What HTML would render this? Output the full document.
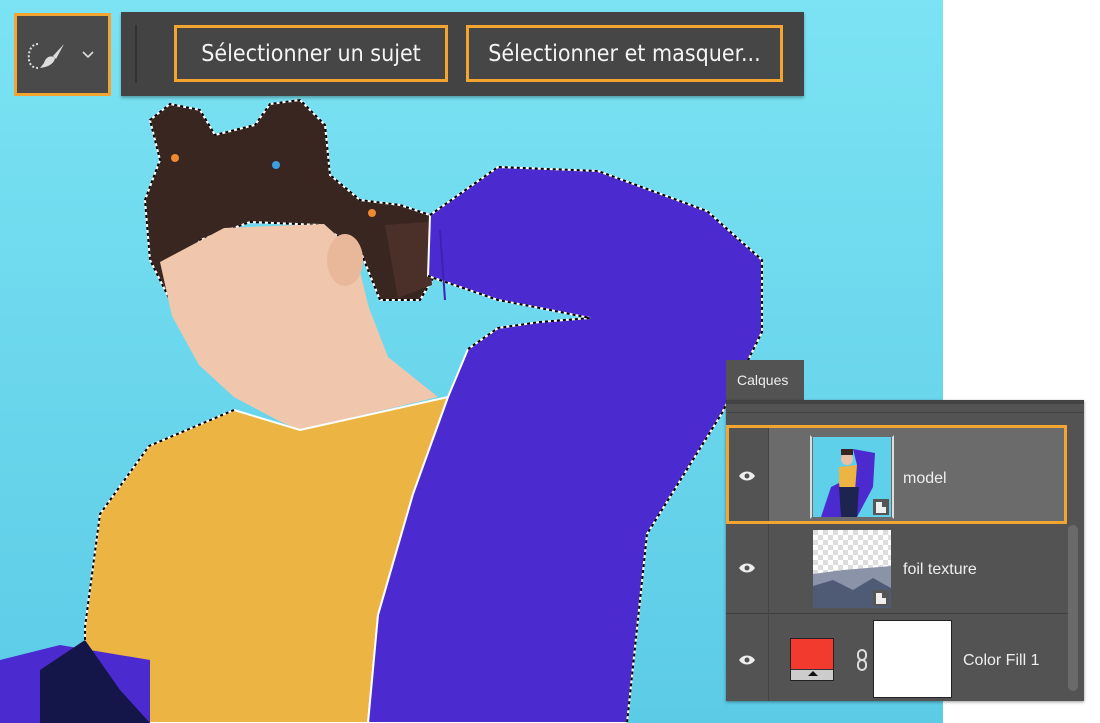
<!DOCTYPE html>
<html><head><meta charset="utf-8"><style>
*{margin:0;padding:0;box-sizing:border-box}
body{width:1100px;height:723px;overflow:hidden;background:#fff;position:relative;font-family:"Liberation Sans",sans-serif}
.abs{position:absolute}
.btn{position:absolute;top:25px;height:57px;border:3px solid #f2a530;background:#464646;color:#f4f4f4;font-size:23px;display:flex;align-items:center;justify-content:center;font-family:"DejaVu Sans Condensed","Liberation Sans Narrow","Liberation Sans",sans-serif}
.lbl{position:absolute;color:#eee;font-size:16px}
</style></head><body>
<svg class="abs" style="left:0;top:0" width="943" height="723" viewBox="0 0 943 723">
<defs><linearGradient id="bg" x1="0" y1="0" x2="0" y2="1"><stop offset="0" stop-color="#7be3f3"/><stop offset="1" stop-color="#5ccbe6"/></linearGradient></defs>
<rect width="943" height="723" fill="url(#bg)"/>
<g stroke="#fff" stroke-width="2">
<path d="M150 120 L170 104 L200 110 L215 135 L255 125 L270 104 L300 100 L325 125 L330 175 L360 200 L400 205 L430 215 L438 270 L420 300 L380 300 L360 250 L320 225 L250 222 L200 240 L170 300 L150 260 L145 200 L160 160 Z" fill="#3a2620"/>
</g>
<path d="M150 120 L170 104 L200 110 L215 135 L255 125 L270 104 L300 100 L325 125 L330 175 L360 200 L400 205 L430 215 L438 270 L420 300 L380 300 L360 250 L320 225 L250 222 L200 240 L170 300 L150 260 L145 200 L160 160 Z" fill="none" stroke="#000" stroke-width="2" stroke-dasharray="3 3"/>
<path d="M160 262 L224 228 L324 224 L355 252 L369 308 L388 357 L438 397 L300 430 L279 421 L234 397 L199 365 L172 316 Z" fill="#f0c7ad"/>
<ellipse cx="345" cy="260" rx="18" ry="26" fill="#e9b89b"/>
<path d="M385 225 L428 222 L432 285 L398 298 Z" fill="#4a3028"/>
<path d="M234 410 L300 430 L448 397 L413 494 L378 615 L368 723 L85 723 L85 627 L100 514 L149 446 Z" fill="#ecb443" stroke="#fff" stroke-width="2"/>
<path d="M234 410 L149 446 L100 514 L85 627 L85 723" fill="none" stroke="#000" stroke-width="2" stroke-dasharray="3 3"/>
<path d="M430 215 L498 167 L598 171 L707 211 L762 260 L762 332 L722 413 L647 534 L627 723 L368 723 L378 615 L413 494 L448 397 L468 349 L498 328 L540 322 L590 318 L540 308 L498 300 L428 276 Z" fill="#4b2bd0" stroke="#fff" stroke-width="2"/>
<path d="M430 215 L498 167 L598 171 L707 211 L762 260 L762 332 L722 413 L647 534 L627 723 M468 349 L498 328 L540 322 L590 318 L540 308 L498 300 L428 276" fill="none" stroke="#000" stroke-width="2" stroke-dasharray="3 3"/>
<path d="M440 230 L445 300" stroke="#3d22b0" stroke-width="2" fill="none"/>
<path d="M0 660 L60 645 L150 660 L150 723 L0 723 Z" fill="#4b2bd0"/>
<path d="M40 670 L85 640 L120 690 L150 723 L40 723 Z" fill="#14164a"/>
<circle cx="175" cy="158" r="4" fill="#f08a30"/><circle cx="276" cy="165" r="4" fill="#3aa0e0"/><circle cx="372" cy="213" r="4" fill="#f08a30"/>
</svg>

<div class="abs" style="left:14px;top:13px;width:97px;height:83px;border:3px solid #f2a530;background:#4a4a4a"></div>
<svg class="abs" style="left:24px;top:38px" width="80" height="36" viewBox="0 0 80 36">
<path d="M14 6 C6 6 4 16 5 22 C6 28 10 30 14 30" stroke="#ddd" stroke-width="2" stroke-dasharray="2 2" fill="none"/>
<path d="M20 25 C22 18 28 17 31 20 C30 26 24 29 16 30 Z" fill="#ddd"/>
<path d="M29 18 L40 6 L32 21 Z" fill="#ddd"/>
<path d="M59 14 L64 19 L69 14" stroke="#ddd" stroke-width="1.6" fill="none"/>
</svg>
<div class="abs" style="left:121px;top:12px;width:683px;height:84px;background:#434343;box-shadow:0 2px 3px rgba(0,0,0,.3)"></div>
<div class="abs" style="left:135px;top:25px;width:2px;height:58px;background:#333"></div>
<div class="btn" style="left:174px;width:274px">Sélectionner un sujet</div>
<div class="btn" style="left:466px;width:317px">Sélectionner et masquer...</div>

<div class="abs" style="left:726px;top:360px;width:78px;height:42px;background:#535353;color:#eee;font-size:14px;padding:12px 0 0 11px">Calques</div>
<div class="abs" style="left:726px;top:400px;width:358px;height:301px;background:#535353;box-shadow:0 1px 3px rgba(0,0,0,.4)">
 <div class="abs" style="left:0;top:0;width:358px;height:4px;background:#434343"></div>
 <div class="abs" style="left:0;top:12px;width:358px;height:1px;background:#444"></div>
 <div class="abs" style="left:42px;top:25px;width:298px;height:98px;background:#6b6b6b"></div>
 <div class="abs" style="left:0;top:123px;width:342px;height:1px;background:#3f3f3f"></div>
 <div class="abs" style="left:0;top:213px;width:342px;height:1px;background:#3f3f3f"></div>
 <div class="abs" style="left:42px;top:25px;width:1px;height:276px;background:#444"></div>
 <div class="abs" style="left:342px;top:125px;width:10px;height:166px;background:#6a6a6a;border-radius:5px"></div>
 <div class="abs" style="left:0;top:25px;width:341px;height:99px;border:3px solid #f2a530"></div>
 <svg class="abs" style="left:12px;top:70px" width="18" height="12" viewBox="0 0 18 12"><path d="M1 6 C5 0 13 0 17 6 C13 12 5 12 1 6Z" fill="#eee"/><circle cx="9" cy="6" r="2.5" fill="#535353"/></svg>
 <svg class="abs" style="left:12px;top:162px" width="18" height="12" viewBox="0 0 18 12"><path d="M1 6 C5 0 13 0 17 6 C13 12 5 12 1 6Z" fill="#eee"/><circle cx="9" cy="6" r="2.5" fill="#535353"/></svg>
 <svg class="abs" style="left:12px;top:254px" width="18" height="12" viewBox="0 0 18 12"><path d="M1 6 C5 0 13 0 17 6 C13 12 5 12 1 6Z" fill="#eee"/><circle cx="9" cy="6" r="2.5" fill="#535353"/></svg>
 <div class="abs" style="left:84px;top:35px;width:84px;height:84px;border:2px solid #ddd;border-top-color:transparent;border-bottom-color:transparent"></div>
 <svg class="abs" style="left:87px;top:37px" width="78" height="80" viewBox="0 0 78 80">
  <rect width="78" height="80" fill="#5fd0ea"/>
  <circle cx="34" cy="22" r="6" fill="#e9c0a6"/><path d="M28 12 h12 v6 h-12z" fill="#3a2620"/>
  <path d="M26 30 L44 28 L44 50 L26 50 Z" fill="#ecb443"/>
  <path d="M40 12 L62 16 L60 50 L44 80 L40 80 L44 28 Z" fill="#4b2bd0"/>
  <path d="M8 80 L18 50 L26 46 L30 80 Z" fill="#4b2bd0"/>
  <path d="M26 50 L46 50 L44 80 L28 80 Z" fill="#1d2450"/>
  <rect x="60" y="62" width="16" height="16" fill="#555"/><path d="M63 65h6v5h4v6h-10z" fill="#eee"/>
 </svg>
 <div class="lbl" style="left:177px;top:70px">model</div>
 <svg class="abs" style="left:87px;top:130px" width="78" height="78" viewBox="0 0 78 78">
  <defs><pattern id="ck" width="10" height="10" patternUnits="userSpaceOnUse"><rect width="10" height="10" fill="#fff"/><rect width="5" height="5" fill="#ddd"/><rect x="5" y="5" width="5" height="5" fill="#ddd"/></pattern></defs>
  <rect width="78" height="78" fill="url(#ck)"/>
  <path d="M0 44 L30 40 L78 36 L78 78 L0 78Z" fill="#8a93a8"/>
  <path d="M0 56 L20 50 L40 60 L60 48 L78 58 L78 78 L0 78Z" fill="#4f5a75"/>
  <rect x="60" y="60" width="16" height="16" fill="#555"/><path d="M63 63h6v5h4v6h-10z" fill="#eee"/>
 </svg>
 <div class="lbl" style="left:177px;top:161px">foil texture</div>
 <div class="abs" style="left:64px;top:238px;width:44px;height:43px;background:#f33a2e;border:1px solid #222"></div>
 <div class="abs" style="left:65px;top:269px;width:42px;height:11px;background:#ccc;border-top:1px solid #333"></div>
 <div class="abs" style="left:82px;top:271px;width:0;height:0;border-left:5px solid transparent;border-right:5px solid transparent;border-bottom:5px solid #111"></div>
 <svg class="abs" style="left:130px;top:248px" width="12" height="24" viewBox="0 0 12 24"><rect x="2" y="2" width="8" height="10" rx="4" fill="none" stroke="#ddd" stroke-width="2"/><rect x="2" y="12" width="8" height="10" rx="4" fill="none" stroke="#ddd" stroke-width="2"/></svg>
 <div class="abs" style="left:147px;top:220px;width:79px;height:78px;background:#fff;border:1px solid #222"></div>
 <div class="lbl" style="left:237px;top:252px">Color Fill 1</div>
</div>
</body></html>
